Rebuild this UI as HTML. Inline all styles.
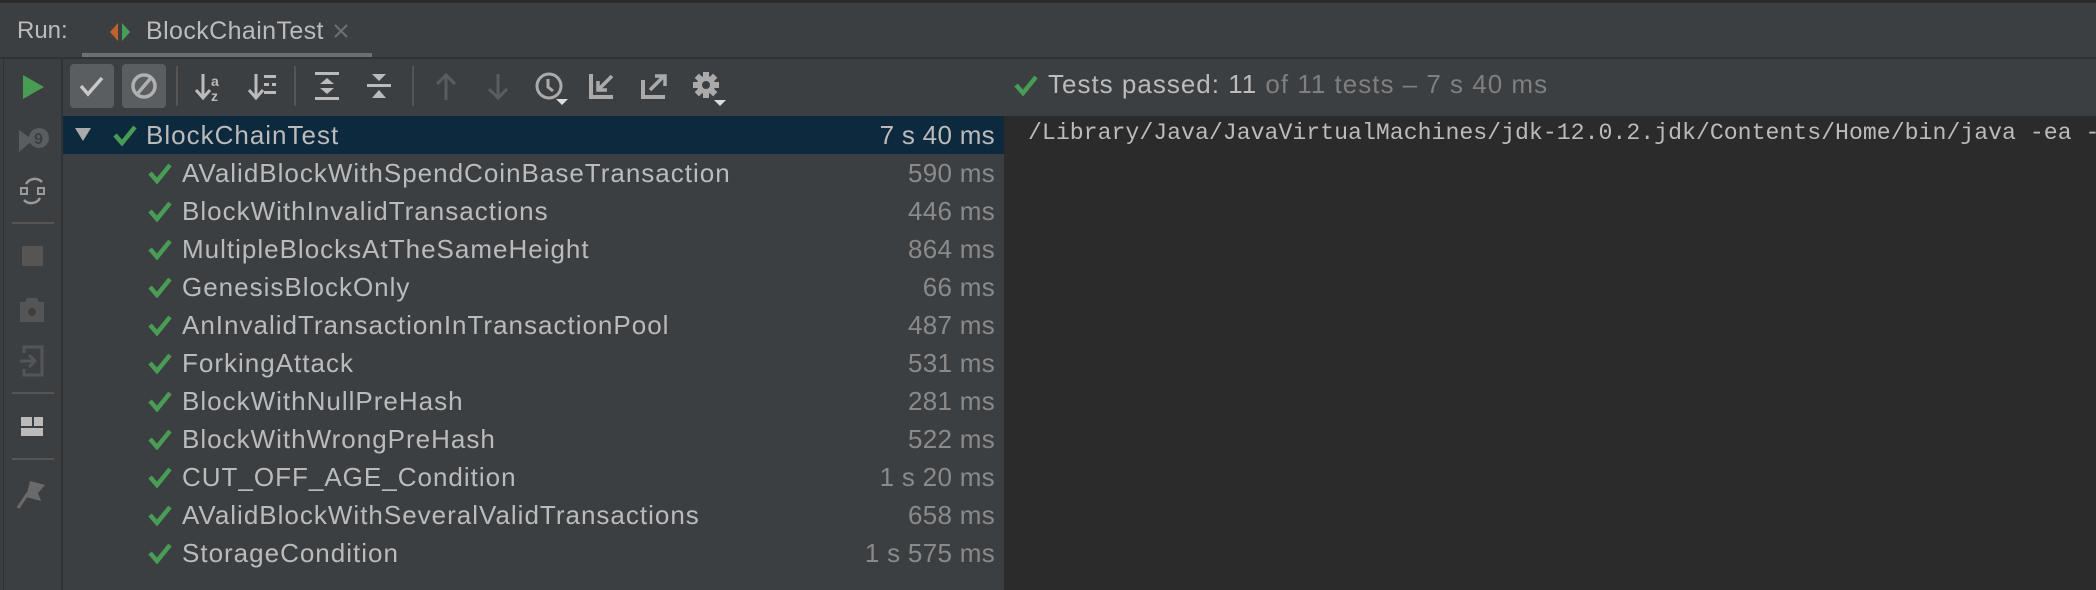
<!DOCTYPE html>
<html><head><meta charset="utf-8"><style>
*{margin:0;padding:0;box-sizing:border-box}
body{width:2096px;height:590px;background:#3c3f41;overflow:hidden;position:relative;font-family:"Liberation Sans",sans-serif;color:#bbbbbb}
.a{position:absolute}
.t{font-size:26px;white-space:nowrap;letter-spacing:1px;line-height:30px}
.ms{color:#8a8a8a;text-align:right;width:220px;letter-spacing:0.3px}
</style></head><body>
<div class="a" style="left:0;top:0;width:2096px;height:3px;background:#2b2b2b"></div>
<div class="a" style="left:0;top:57px;width:2096px;height:2px;background:#323232"></div>
<div class="a t" style="left:17px;top:16px;color:#bbb;font-size:24px;letter-spacing:0">Run:</div>
<svg class="a" style="left:108px;top:21px" width="26" height="22"><polygon points="10,2 2,11 10,20" fill="#c0622c"/><polygon points="14,2 22,11 14,20" fill="#499c54"/></svg>
<div class="a t" style="left:146px;top:16px;font-size:25px;letter-spacing:0.4px">BlockChainTest</div>
<svg class="a" style="left:332px;top:22px" width="18" height="18"><path d="M3 3L15 15M15 3L3 15" stroke="#6e6e6e" stroke-width="2"/></svg>
<div class="a" style="left:82px;top:53px;width:290px;height:4px;background:#6c7073"></div>
<!-- left sidebar -->
<div class="a" style="left:3px;top:59px;width:1px;height:531px;background:#323232"></div>
<div class="a" style="left:61px;top:59px;width:2px;height:531px;background:#323232"></div>
<svg class="a" style="left:20px;top:73px" width="26" height="28"><polygon points="3,2 24,14 3,26" fill="#499c54"/></svg>
<svg class="a" style="left:17px;top:124px" width="34" height="30"><polygon points="2,6 16,16 2,28" fill="#5a5d5f"/><circle cx="22" cy="14" r="10" fill="#5a5d5f"/><text x="17" y="20" font-size="16" font-weight="bold" fill="#3c3f41" font-family="Liberation Sans">9</text></svg>
<svg class="a" style="left:18px;top:174px" width="30" height="34" fill="none" stroke="#9a9a9a" stroke-width="2.5"><path d="M8 10A10 10 0 0 1 24 8M22 24A10 10 0 0 1 6 26"/><rect x="3" y="14" width="6" height="6" stroke-width="2"/><rect x="20" y="14" width="6" height="6" stroke-width="2"/></svg>
<div class="a" style="left:12px;top:222px;width:42px;height:2px;background:#555"></div>
<div class="a" style="left:22px;top:246px;width:21px;height:20px;background:#555"></div>
<svg class="a" style="left:18px;top:295px" width="28" height="30"><path d="M9 3h10l2 4h5v20H2V7h5z" fill="#555"/><circle cx="14" cy="17" r="4" fill="#3c3f41"/></svg>
<svg class="a" style="left:18px;top:345px" width="28" height="32" fill="none" stroke="#555" stroke-width="3"><path d="M6 8V2h18v28H6v-6"/><path d="M2 16h14M11 10l6 6-6 6"/></svg>
<div class="a" style="left:12px;top:392px;width:42px;height:2px;background:#555"></div>
<svg class="a" style="left:19px;top:415px" width="28" height="24"><rect x="2" y="2" width="11" height="9" fill="#bbb"/><rect x="15" y="2" width="9" height="9" fill="#bbb"/><rect x="2" y="13" width="22" height="8" fill="#bbb"/></svg>
<div class="a" style="left:12px;top:458px;width:42px;height:2px;background:#555"></div>
<svg class="a" style="left:14px;top:475px" width="34" height="36"><path d="M4 33L14 18" stroke="#6a6a6a" stroke-width="3"/><polygon points="16,6 31,10 24,18 27,26 12,22" fill="#6a6a6a"/></svg>
<!-- toolbar -->
<div class="a" style="left:70px;top:64px;width:44px;height:44px;background:#5a5e61;border-radius:4px"></div>
<svg class="a" style="left:76px;top:72px" width="32" height="28"><path d="M5 14l7 8L26 6" stroke="#c9c9c9" stroke-width="3.5" fill="none"/></svg>
<div class="a" style="left:122px;top:64px;width:44px;height:44px;background:#5a5e61;border-radius:4px"></div>
<svg class="a" style="left:128px;top:70px" width="32" height="32" fill="none" stroke="#b0b0b0" stroke-width="3.5"><circle cx="16" cy="16" r="11"/><path d="M22 9L10 23"/></svg>
<div class="a" style="left:176px;top:66px;width:2px;height:40px;background:#555"></div>
<svg class="a" style="left:194px;top:70px" width="32" height="34"><path d="M9 4v24M2 20l7 8 7-8" stroke="#bbb" stroke-width="3" fill="none"/><text x="17" y="16" font-size="14" font-weight="bold" fill="#bbb" font-family="Liberation Sans">a</text><text x="17" y="31" font-size="14" font-weight="bold" fill="#bbb" font-family="Liberation Sans">z</text></svg>
<svg class="a" style="left:247px;top:70px" width="32" height="34"><path d="M9 4v24M2 20l7 8 7-8" stroke="#bbb" stroke-width="3" fill="none"/><rect x="17" y="5" width="12" height="3" fill="#bbb"/><rect x="17" y="13" width="5" height="3" fill="#bbb"/><rect x="25" y="13" width="4" height="3" fill="#bbb"/><rect x="17" y="21" width="12" height="3" fill="#bbb"/></svg>
<div class="a" style="left:294px;top:66px;width:2px;height:40px;background:#555"></div>
<svg class="a" style="left:313px;top:70px" width="30" height="32" fill="#bbb"><rect x="2" y="2" width="24" height="3"/><rect x="2" y="27" width="24" height="3"/><polygon points="14,8 21,14 7,14"/><polygon points="14,24 21,18 7,18"/></svg>
<svg class="a" style="left:365px;top:70px" width="30" height="32" fill="#bbb"><rect x="2" y="14" width="24" height="3"/><polygon points="14,11 21,4 7,4"/><polygon points="14,20 21,28 7,28"/></svg>
<div class="a" style="left:412px;top:66px;width:2px;height:40px;background:#555"></div>
<svg class="a" style="left:434px;top:72px" width="24" height="30"><path d="M12 4v24M3 12l9-9 9 9" stroke="#5a5d5f" stroke-width="3" fill="none"/></svg>
<svg class="a" style="left:486px;top:72px" width="24" height="30"><path d="M12 2v24M3 17l9 9 9-9" stroke="#5a5d5f" stroke-width="3" fill="none"/></svg>
<svg class="a" style="left:534px;top:70px" width="36" height="36"><circle cx="15" cy="16" r="12" stroke="#aaa" stroke-width="3" fill="none"/><path d="M14 9v8l5 4" stroke="#aaa" stroke-width="3" fill="none"/><polygon points="22,29 34,29 28,35" fill="#ddd"/></svg>
<svg class="a" style="left:588px;top:72px" width="28" height="28" fill="none" stroke="#aaa" stroke-width="4"><path d="M3 2v23h22"/><path d="M24 4L11 17M10 9v9h9" stroke-width="3.5"/></svg>
<svg class="a" style="left:640px;top:72px" width="30" height="28" fill="none" stroke="#aaa" stroke-width="4"><path d="M3 8v17h22"/><path d="M10 18L24 4M15 4h10v10" stroke-width="3.5"/></svg>
<svg class="a" style="left:691px;top:69px" width="36" height="38"><g transform="translate(15,16)" fill="#aaa"><circle r="9"/><rect x="-3" y="-13" width="6" height="26"/><rect x="-13" y="-3" width="26" height="6"/><rect x="-3" y="-13" width="6" height="26" transform="rotate(45)"/><rect x="-3" y="-13" width="6" height="26" transform="rotate(-45)"/><circle r="4" fill="#3c3f41"/></g><polygon points="23,31 35,31 29,37" fill="#ddd"/></svg>
<!-- status -->
<svg class="a" style="left:1013px;top:74px" width="26" height="22"><path d="M3 11l7 8L23 3" stroke="#499c54" stroke-width="4.5" fill="none"/></svg>
<div class="a t" style="left:1048px;top:69px"><span style="color:#bbb">Tests passed: 11</span> <span style="color:#7f7f7f">of 11 tests – 7 s 40 ms</span></div>
<!-- tree -->
<div class="a" style="left:63px;top:116px;width:941px;height:38px;background:#0d293e"></div>
<div class="a" style="left:1004px;top:116px;width:1092px;height:474px;background:#2b2b2b"></div>
<div class="a" style="left:1028px;top:120px;font-family:'Liberation Mono',monospace;font-size:23.2px;color:#bbb;white-space:nowrap">/Library/Java/JavaVirtualMachines/jdk-12.0.2.jdk/Contents/Home/bin/java -ea -</div>
<svg class="a" style="left:74px;top:126px" width="18" height="16"><polygon points="1,2 17,2 9,15" fill="#aaa"/></svg>
<svg class="a" style="left:112px;top:124px" width="26" height="22"><path d="M3 11l7 8L23 3" stroke="#499c54" stroke-width="4.5" fill="none"/></svg>
<div class="a t" style="left:146px;top:120px">BlockChainTest</div>
<div class="a t ms" style="left:775px;top:120px;color:#bbb">7 s 40 ms</div>
<div>
<svg class="a" style="left:147px;top:162px" width="26" height="22"><path d="M3 11l7 8L23 3" stroke="#499c54" stroke-width="4.5" fill="none"/></svg><div class="a t" style="left:182px;top:158px">AValidBlockWithSpendCoinBaseTransaction</div><div class="a t ms" style="left:775px;top:158px">590 ms</div>
<svg class="a" style="left:147px;top:200px" width="26" height="22"><path d="M3 11l7 8L23 3" stroke="#499c54" stroke-width="4.5" fill="none"/></svg><div class="a t" style="left:182px;top:196px">BlockWithInvalidTransactions</div><div class="a t ms" style="left:775px;top:196px">446 ms</div>
<svg class="a" style="left:147px;top:238px" width="26" height="22"><path d="M3 11l7 8L23 3" stroke="#499c54" stroke-width="4.5" fill="none"/></svg><div class="a t" style="left:182px;top:234px">MultipleBlocksAtTheSameHeight</div><div class="a t ms" style="left:775px;top:234px">864 ms</div>
<svg class="a" style="left:147px;top:276px" width="26" height="22"><path d="M3 11l7 8L23 3" stroke="#499c54" stroke-width="4.5" fill="none"/></svg><div class="a t" style="left:182px;top:272px">GenesisBlockOnly</div><div class="a t ms" style="left:775px;top:272px">66 ms</div>
<svg class="a" style="left:147px;top:314px" width="26" height="22"><path d="M3 11l7 8L23 3" stroke="#499c54" stroke-width="4.5" fill="none"/></svg><div class="a t" style="left:182px;top:310px">AnInvalidTransactionInTransactionPool</div><div class="a t ms" style="left:775px;top:310px">487 ms</div>
<svg class="a" style="left:147px;top:352px" width="26" height="22"><path d="M3 11l7 8L23 3" stroke="#499c54" stroke-width="4.5" fill="none"/></svg><div class="a t" style="left:182px;top:348px">ForkingAttack</div><div class="a t ms" style="left:775px;top:348px">531 ms</div>
<svg class="a" style="left:147px;top:390px" width="26" height="22"><path d="M3 11l7 8L23 3" stroke="#499c54" stroke-width="4.5" fill="none"/></svg><div class="a t" style="left:182px;top:386px">BlockWithNullPreHash</div><div class="a t ms" style="left:775px;top:386px">281 ms</div>
<svg class="a" style="left:147px;top:428px" width="26" height="22"><path d="M3 11l7 8L23 3" stroke="#499c54" stroke-width="4.5" fill="none"/></svg><div class="a t" style="left:182px;top:424px">BlockWithWrongPreHash</div><div class="a t ms" style="left:775px;top:424px">522 ms</div>
<svg class="a" style="left:147px;top:466px" width="26" height="22"><path d="M3 11l7 8L23 3" stroke="#499c54" stroke-width="4.5" fill="none"/></svg><div class="a t" style="left:182px;top:462px">CUT_OFF_AGE_Condition</div><div class="a t ms" style="left:775px;top:462px">1 s 20 ms</div>
<svg class="a" style="left:147px;top:504px" width="26" height="22"><path d="M3 11l7 8L23 3" stroke="#499c54" stroke-width="4.5" fill="none"/></svg><div class="a t" style="left:182px;top:500px">AValidBlockWithSeveralValidTransactions</div><div class="a t ms" style="left:775px;top:500px">658 ms</div>
<svg class="a" style="left:147px;top:542px" width="26" height="22"><path d="M3 11l7 8L23 3" stroke="#499c54" stroke-width="4.5" fill="none"/></svg><div class="a t" style="left:182px;top:538px">StorageCondition</div><div class="a t ms" style="left:775px;top:538px">1 s 575 ms</div>
</div>
</body></html>
